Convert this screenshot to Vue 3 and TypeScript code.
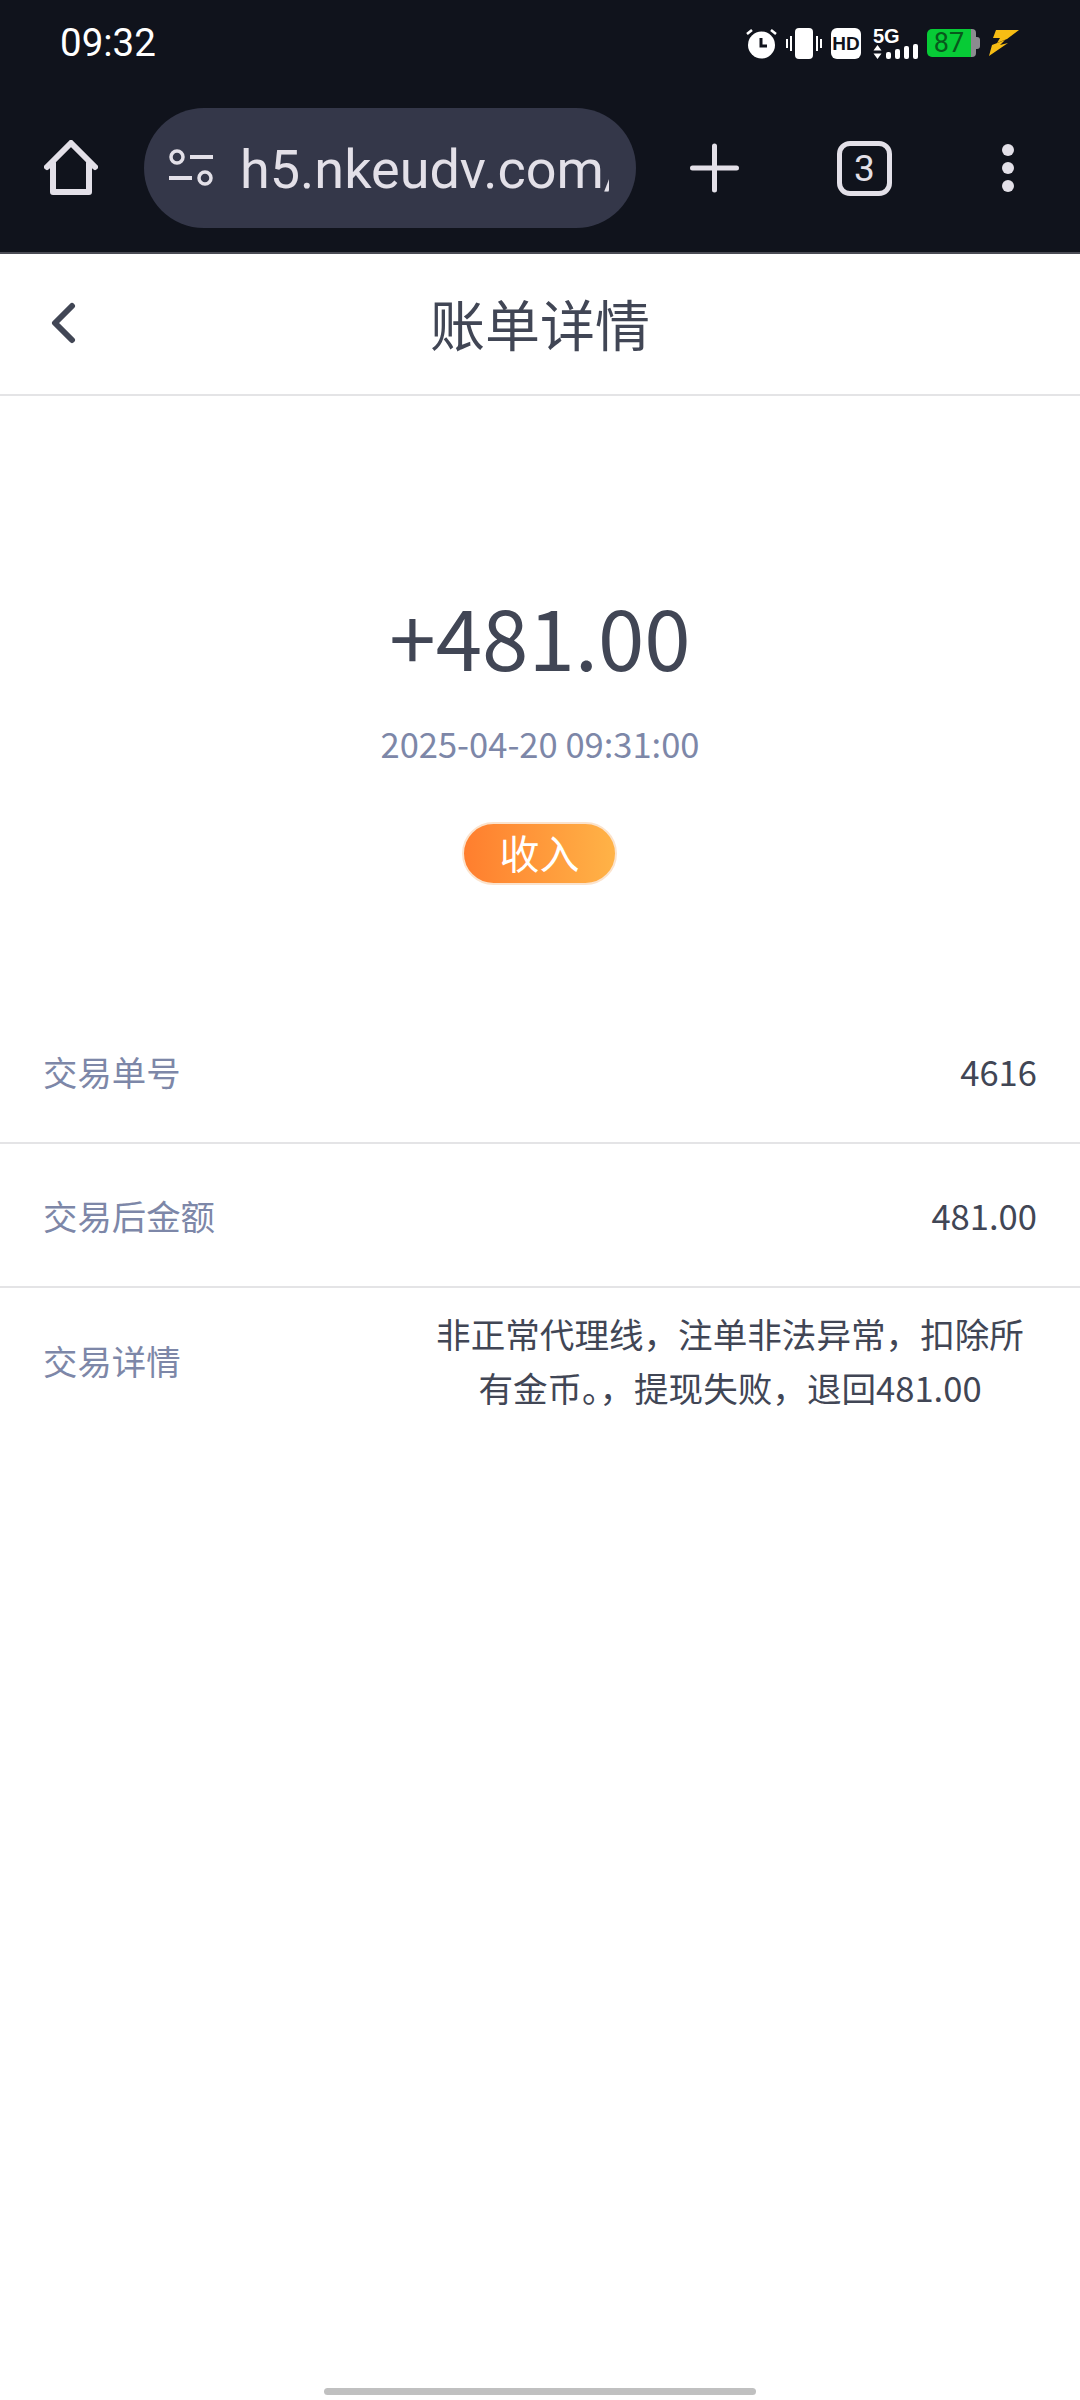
<script setup lang="ts">
interface Row {
  label: string
  value: string
}

const rows: Row[] = [
  { label: '交易单号', value: '4616' },
  { label: '交易后金额', value: '481.00' },
  { label: '交易详情', value: '非正常代理线，注单非法异常，扣除所有金币。，提现失败，退回481.00' }
]
</script>

<template>
  <div class="page">
    <div class="browser">
      <div class="status">
        <span class="time">09:32</span>
        <div class="status-icons">
          <svg width="31" height="31" viewBox="0 0 31 31">
            <circle cx="15.5" cy="17" r="13.5" fill="#fff" />
            <path d="M15 10v8h6" fill="none" stroke="#10131c" stroke-width="3" />
            <path d="M1 6l5-4M30 6l-5-4" stroke="#fff" stroke-width="2.6" />
          </svg>
          <svg width="36" height="31" viewBox="0 0 36 31">
            <rect x="9" y="0" width="18" height="31" rx="4" fill="#fff" />
            <path d="M1 11v9M5 8v15M31 8v15M35 11v9" stroke="#fff" stroke-width="2" />
          </svg>
          <span class="hd">HD</span>
          <div class="net">
            <span class="five-g">5G</span>
            <div class="net-low">
              <svg width="9" height="14" viewBox="0 0 9 14">
                <path d="M4.500 0L8.500 5.500H.5zM4.500 14L.5 8.500H8.500z" fill="#fff" />
              </svg>
              <i class="bar b1"></i>
              <i class="bar b2"></i>
              <i class="bar b3"></i>
              <i class="bar b4"></i>
            </div>
          </div>
          <div class="battery">
            <span class="battery-level">87</span>
            <i class="battery-rest"></i>
            <i class="battery-cap"></i>
          </div>
          <svg width="31" height="26" viewBox="0 0 31 26">
            <path d="M7 0H30L18 9L8 13L11 8H4z" fill="#f7bd14" />
            <path d="M3 15L16 10L11 15L19 13L0 26z" fill="#f7bd14" />
          </svg>
        </div>
      </div>
      <div class="toolbar">
        <svg class="home" width="54" height="56" viewBox="0 0 54 56">
          <path d="M3 27L27 3L51 27M9 23V52H45V23" fill="none" stroke="#e3e0e8" stroke-width="6" stroke-linecap="round" stroke-linejoin="round" />
        </svg>
        <div class="url">
          <svg class="url-icon" width="46" height="38" viewBox="0 0 46 38">
            <circle cx="9" cy="8" r="6" fill="none" stroke="#e3e0e8" stroke-width="3.500" />
            <circle cx="37" cy="29" r="6" fill="none" stroke="#e3e0e8" stroke-width="3.500" />
            <path d="M22 8H45M1 29H24" stroke="#e3e0e8" stroke-width="4" />
          </svg>
          <div class="url-clip"><span class="url-text">h5.nkeudv.com/api</span></div>
        </div>
        <svg class="plus" width="49" height="50" viewBox="0 0 49 50">
          <path d="M2.500 25H46.500M24.500 3V47" stroke="#e3e0e8" stroke-width="5" stroke-linecap="round" />
        </svg>
        <div class="tabs">3</div>
        <div class="dots"><i></i><i></i><i></i></div>
      </div>
    </div>

    <header class="head">
      <svg class="back" width="26" height="42" viewBox="0 0 26 42">
        <path d="M22 4L5 21L22 38" fill="none" stroke="#414655" stroke-width="6" stroke-linecap="round" stroke-linejoin="round" />
      </svg>
      <h1 class="title">账单详情</h1>
    </header>

    <section class="hero">
      <div class="amount">+481.00</div>
      <div class="date">2025-04-20 09:31:00</div>
      <div class="tag">收入</div>
    </section>

    <section class="list">
      <div v-for="row in rows" :key="row.label" class="row">
        <span class="label">{{ row.label }}</span>
        <span class="value">{{ row.value }}</span>
      </div>
    </section>

    <div class="home-bar"></div>
  </div>
</template>

<style>
html,
body {
  margin: 0;
  background: #fff;
}
</style>

<style scoped>
.page {
  position: relative;
  width: 1080px;
  height: 2400px;
  overflow: hidden;
  background: #fff;
  font-family: "Noto Sans CJK SC", "Noto Sans", sans-serif;
}

.browser {
  height: 252px;
  background: #10131c;
  border-bottom: 2px solid #4b4c55;
}

.status {
  display: flex;
  align-items: center;
  justify-content: space-between;
  height: 84px;
  padding: 0 60px;
  box-sizing: border-box;
}

.time {
  font-family: Roboto, sans-serif;
  font-size: 38.500px;
  color: #fff;
}

.status-icons {
  display: flex;
  align-items: center;
  gap: 9px;
  margin-top: 2px;
}

.hd {
  width: 30px;
  height: 31px;
  border-radius: 6px;
  background: #fff;
  color: #10131c;
  font-family: "Liberation Sans", sans-serif;
  font-size: 19px;
  font-weight: 700;
  line-height: 31px;
  text-align: center;
}

.net {
  display: flex;
  flex-direction: column;
  width: 45px;
  height: 31px;
  margin-left: 3px;
}

.five-g {
  height: 16px;
  color: #fff;
  font-family: "Liberation Sans", sans-serif;
  font-size: 20px;
  font-weight: 700;
  line-height: 16px;
}

.net-low {
  display: flex;
  align-items: flex-end;
  justify-content: space-between;
  height: 15px;
}

.bar {
  width: 5px;
  border-radius: 2px;
  background: #fff;
}

.b1 {
  height: 7px;
}

.b2 {
  height: 10px;
}

.b3 {
  height: 13px;
}

.b4 {
  height: 15px;
  margin-top: -2px;
}

.battery {
  display: flex;
  align-items: center;
  height: 28px;
}

.battery-level {
  width: 44px;
  height: 28px;
  border-radius: 5px 0 0 5px;
  background: #07cb36;
  color: #07591c;
  font-family: Roboto, sans-serif;
  font-size: 27px;
  line-height: 28px;
  text-align: center;
}

.battery-rest {
  width: 5px;
  height: 28px;
  border-radius: 0 4px 4px 0;
  background: #8b8b8f;
}

.battery-cap {
  width: 4px;
  height: 12px;
  border-radius: 0 3px 3px 0;
  background: #8b8b8f;
}

.toolbar {
  display: flex;
  align-items: center;
  height: 168px;
  padding: 0 0 0 44px;
  box-sizing: border-box;
}

.home {
  flex-shrink: 0;
  margin-top: -1px;
}

.url {
  display: flex;
  align-items: center;
  width: 492px;
  height: 120px;
  margin-left: 46px;
  margin-top: -1px;
  padding: 0 24px;
  box-sizing: border-box;
  border-radius: 60px;
  background: #343749;
}

.url-icon {
  flex-shrink: 0;
}

.url-clip {
  width: 369px;
  margin-left: 26px;
  overflow: hidden;
  white-space: nowrap;
}

.url-text {
  display: block;
  margin-top: 4px;
  color: #e3e0e8;
  font-family: Roboto, sans-serif;
  font-size: 54px;
  line-height: 70px;
  white-space: nowrap;
}

.plus {
  flex-shrink: 0;
  margin-left: 54px;
}

.tabs {
  flex-shrink: 0;
  width: 55px;
  height: 55px;
  margin-left: 98px;
  border: 5px solid #e3e0e8;
  border-radius: 13px;
  box-sizing: border-box;
  color: #e3e0e8;
  font-family: Roboto, sans-serif;
  font-size: 37px;
  line-height: 45px;
  text-align: center;
}

.dots {
  display: flex;
  flex-direction: column;
  gap: 6px;
  margin-left: 110px;
}

.dots i {
  width: 12px;
  height: 12px;
  border-radius: 50%;
  background: #e3e0e8;
}

.head {
  position: relative;
  display: flex;
  align-items: center;
  justify-content: center;
  height: 140px;
  border-bottom: 2px solid #e4e4e6;
}

.back {
  position: absolute;
  left: 50px;
  top: 48px;
}

.title {
  margin: 0 0 5px;
  color: #414655;
  font-size: 55px;
  font-weight: 400;
  line-height: 76px;
}

.hero {
  display: flex;
  flex-direction: column;
  align-items: center;
  height: 604px;
  padding-top: 185px;
  box-sizing: border-box;
}

.amount {
  color: #414655;
  font-size: 83.500px;
  line-height: 108px;
}

.date {
  margin-top: 29px;
  color: #7d87a8;
  font-size: 34.500px;
  line-height: 50px;
}

.tag {
  width: 155px;
  height: 63px;
  margin-top: 54px;
  margin-left: -1px;
  border: 2px solid #fbe3cd;
  border-radius: 32px;
  box-sizing: border-box;
  background: linear-gradient(90deg, #ff7e2e, #ffb347);
  color: #fff;
  font-size: 40px;
  line-height: 57px;
  text-align: center;
}

.row {
  display: flex;
  align-items: center;
  justify-content: space-between;
  min-height: 144px;
  padding: 0 43px;
  box-sizing: border-box;
  border-bottom: 2px solid #e4e4e6;
}

.row:last-child {
  min-height: 0;
  padding-top: 18px;
  border-bottom: none;
}

.label {
  flex-shrink: 0;
  color: #7d87a8;
  font-size: 34.400px;
}

.value {
  max-width: 614px;
  color: #414655;
  font-size: 34.600px;
  line-height: 54px;
  text-align: center;
}

.home-bar {
  position: absolute;
  left: 324px;
  bottom: 5px;
  width: 432px;
  height: 7px;
  border-radius: 4px;
  background: #c0c0c0;
}
</style>
